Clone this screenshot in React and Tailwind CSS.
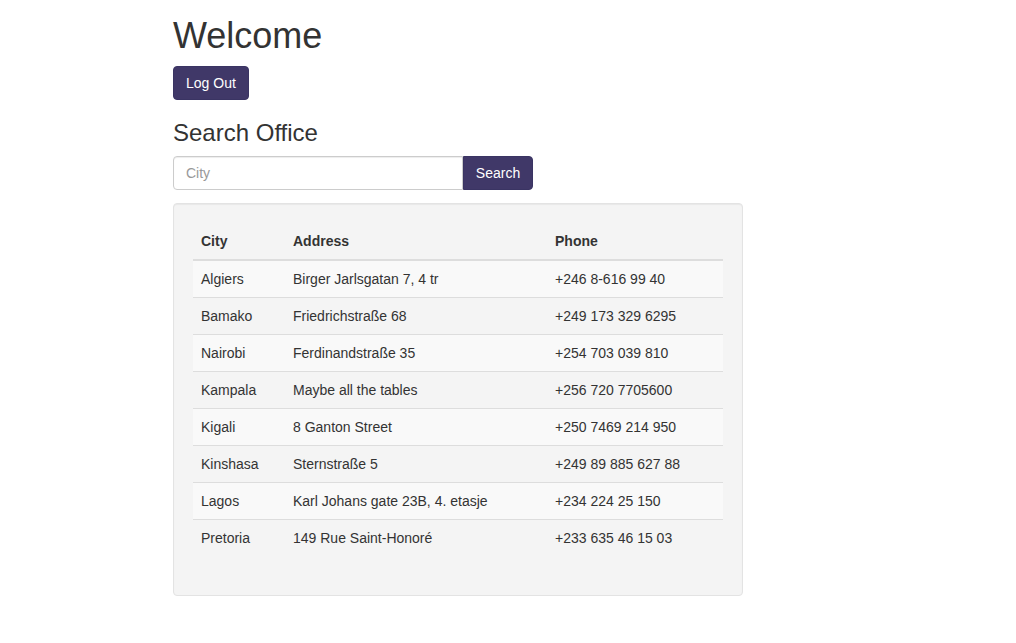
import React from "react";

const offices = [
  { city: "Algiers", address: "Birger Jarlsgatan 7, 4 tr", phone: "+246 8-616 99 40" },
  { city: "Bamako", address: "Friedrichstraße 68", phone: "+249 173 329 6295" },
  { city: "Nairobi", address: "Ferdinandstraße 35", phone: "+254 703 039 810" },
  { city: "Kampala", address: "Maybe all the tables", phone: "+256 720 7705600" },
  { city: "Kigali", address: "8 Ganton Street", phone: "+250 7469 214 950" },
  { city: "Kinshasa", address: "Sternstraße 5", phone: "+249 89 885 627 88" },
  { city: "Lagos", address: "Karl Johans gate 23B, 4. etasje", phone: "+234 224 25 150" },
  { city: "Pretoria", address: "149 Rue Saint-Honoré", phone: "+233 635 46 15 03" },
];

function App() {
  return (
    <div className="min-h-screen bg-white text-[14px] leading-[20px] text-[#333] font-['Liberation_Sans',Arial,sans-serif]">
      <div className="ml-[173px] w-[570px]">
        <h1 className="pt-4 mb-[10px] text-[36px] leading-[39.6px] font-normal">Welcome</h1>
        <button className="h-[34px] px-3 rounded-[4px] border border-[#3a3463] bg-[#403868] text-white">
          Log Out
        </button>

        <h3 className="mt-5 mb-[10px] text-[24px] leading-[26.4px] font-normal">Search Office</h3>
        <div className="flex w-[360px]">
          <input
            type="text"
            placeholder="City"
            className="h-[34px] w-[290px] px-3 border border-[#ccc] rounded-l-[4px] shadow-[inset_0_1px_1px_rgba(0,0,0,0.075)] placeholder:text-[#999] outline-none"
          />
          <button className="h-[34px] w-[70px] rounded-r-[4px] border border-[#3a3463] bg-[#403868] text-white">
            Search
          </button>
        </div>

        <div className="mt-[13px] p-[19px] bg-[#f4f4f4] border border-[#e3e3e3] rounded-[4px] shadow-[inset_0_1px_1px_rgba(0,0,0,0.05)]">
          <table className="w-full mb-5 border-collapse">
            <thead>
              <tr>
                <th className="w-[92px] p-2 text-left font-bold border-b-2 border-[#ddd]">City</th>
                <th className="w-[262px] p-2 text-left font-bold border-b-2 border-[#ddd]">Address</th>
                <th className="p-2 text-left font-bold border-b-2 border-[#ddd]">Phone</th>
              </tr>
            </thead>
            <tbody>
              {offices.map((o, i) => (
                <tr key={o.city} className={i % 2 === 0 ? "bg-[#f9f9f9]" : ""}>
                  <td className={"p-2 " + (i > 0 ? "border-t border-[#ddd]" : "")}>{o.city}</td>
                  <td className={"p-2 " + (i > 0 ? "border-t border-[#ddd]" : "")}>{o.address}</td>
                  <td className={"p-2 " + (i > 0 ? "border-t border-[#ddd]" : "")}>{o.phone}</td>
                </tr>
              ))}
            </tbody>
          </table>
        </div>
      </div>
    </div>
  );
}

export default App;
